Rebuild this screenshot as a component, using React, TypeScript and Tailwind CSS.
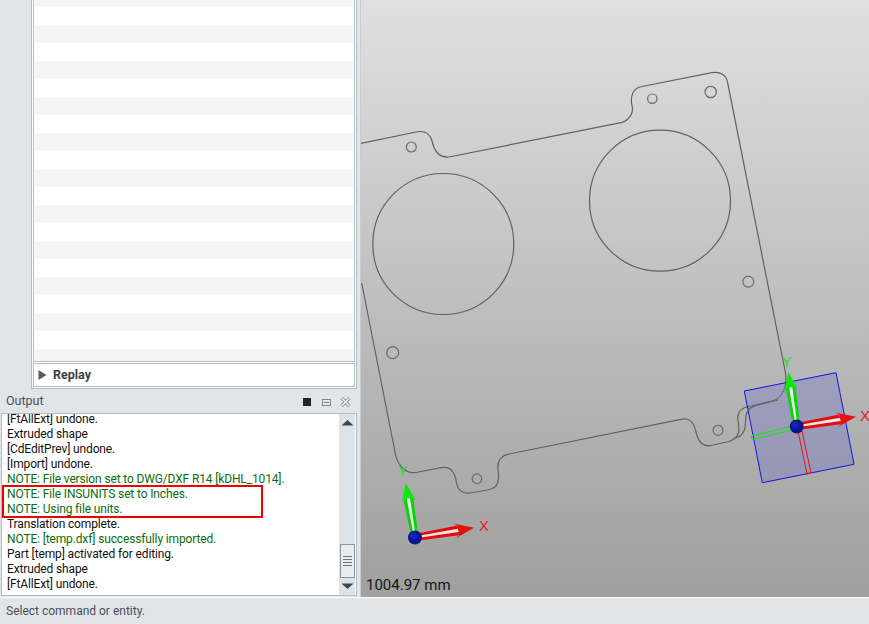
const rows = Array.from({ length: 20 }, (_, i) => i);

const outputLines = [
  { text: "[FtAllExt] undone." },
  { text: "Extruded shape" },
  { text: "[CdEditPrev] undone." },
  { text: "[Import] undone." },
  { text: "NOTE: File version set to DWG/DXF R14 [kDHL_1014].", note: true },
  { text: "NOTE: File INSUNITS set to Inches.", note: true },
  { text: "NOTE: Using file units.", note: true },
  { text: "Translation complete." },
  { text: "NOTE: [temp.dxf] successfully imported.", note: true },
  { text: "Part [temp] activated for editing." },
  { text: "Extruded shape" },
  { text: "[FtAllExt] undone." },
];

const platePath =
  "M361 143.3 L416 132 C426 130 430 134 432 141 C434 150 438 158 449 157 L621 122.7 C630 120 634 112 632 106 C630 96 633 88 642 86.5 L712 72.7 C720 71 726 75 727.5 82 L785.5 373 C787 388 782 398 772 401 L749 406.5 C740 408 737 414 738 421 C740 432 739 438 729 441.5 L711 445.5 C702 447 698 441 696 432 C694 423 690 417 681 419.3 L509 454 C500 456 497 462 498 470 C500 482 497 488 490 489.5 L470 493 C461 494 457 488 456 480 C454 470 449 466 441 467.7 L416 472.5 C404 474 397 464 395 452 L361.7 283";

const holes = [
  { x: 411.3, y: 147, r: 5 },
  { x: 652.3, y: 98.7, r: 4.7 },
  { x: 710.7, y: 92, r: 5.7 },
  { x: 748.3, y: 281.7, r: 5.5 },
  { x: 392.7, y: 352.7, r: 6 },
  { x: 477, y: 478.7, r: 4.8 },
  { x: 718, y: 430.3, r: 5 },
];

const arrowPoints = (ox: number, oy: number, tx: number, ty: number) => {
  const len = Math.hypot(tx - ox, ty - oy);
  const u = [(tx - ox) / len, (ty - oy) / len];
  const n = [-u[1], u[0]];
  const at = (d: number, s: number) => `${ox + u[0] * d + n[0] * s},${oy + u[1] * d + n[1] * s}`;
  const neck = len - 16;
  const base = len - 20;
  return {
    shaft: [at(0, 3.5), at(neck, 5), at(neck, -5), at(0, -3.5)].join(" "),
    head: [at(len, 0), at(base, 7.5), at(neck, 5), at(neck, -5), at(base, -7.5)].join(" "),
    shine: [at(4, 1), at(neck, 1.6), at(neck, -1.6), at(4, -1)].join(" "),
  };
};

const Gizmo = ({ ox, oy, tipY, tipX }: { ox: number; oy: number; tipY: [number, number]; tipX: [number, number] }) => {
  const y = arrowPoints(ox, oy, tipY[0], tipY[1]);
  const x = arrowPoints(ox, oy, tipX[0], tipX[1]);
  return (
    <g>
      <polygon points={y.shaft} fill="#10d010" />
      <polygon points={y.head} fill="#0fe80f" />
      <polygon points={y.shine} fill="#e4ffe4" />
      <polygon points={x.shaft} fill="#dd1010" />
      <polygon points={x.head} fill="#e80f0f" />
      <polygon points={x.shine} fill="#ffe4e4" />
      <circle cx={ox} cy={oy} r="7" fill="#08168e" />
      <circle cx={ox - 1.5} cy={oy - 1.5} r="3.5" fill="#1426b0" />
    </g>
  );
};

const ViewportDrawing = () => (
  <svg viewBox="361 0 508 597" className="absolute inset-0 h-full w-full">
    <path d={platePath} fill="none" stroke="#626262" strokeWidth="1.2" />
    <circle cx="443.3" cy="244" r="70.5" fill="none" stroke="#626262" strokeWidth="1.2" />
    <circle cx="660" cy="200.7" r="70.5" fill="none" stroke="#626262" strokeWidth="1.2" />
    {holes.map((h) => (
      <circle key={`${h.x}-${h.y}`} cx={h.x} cy={h.y} r={h.r} fill="none" stroke="#6a6a6a" strokeWidth="1.2" />
    ))}

    <polygon points="744.3,391 836,372.7 854,464.3 762.3,482.7" fill="#7070c8" fillOpacity="0.35" stroke="#1414e6" strokeWidth="1" />
    <path d="M778 400 C760 405 748 404 746 416 C745 424 747 434 736 438" fill="none" stroke="#626262" strokeWidth="1.2" />
    <polygon points="751,436 791,426.5 792,430 752,439.5" fill="none" stroke="#14e614" strokeWidth="1" />
    <polygon points="798,431 802,431 811,473 807,474" fill="none" stroke="#e61414" strokeWidth="1" />
    <polygon points="788,380 791,379 797,420 794,420" fill="none" stroke="#e61414" strokeWidth="1" />

    <Gizmo ox={415} oy={537.5} tipY={[405.7, 482.7]} tipX={[474, 527.7]} />
    <Gizmo ox={796.7} oy={426.5} tipY={[788.3, 371.7]} tipX={[856, 416.7]} />

    <text x="398" y="476" fill="#18e018" fontSize="14" fontFamily="Liberation Sans, sans-serif">Y</text>
    <text x="479" y="531" fill="#f01818" fontSize="15" fontFamily="Liberation Sans, sans-serif">X</text>
    <text x="782" y="367" fill="#18e018" fontSize="14" fontFamily="Liberation Sans, sans-serif">Y</text>
    <text x="860" y="421" fill="#f01818" fontSize="15" fontFamily="Liberation Sans, sans-serif">X</text>
  </svg>
);

const ScrollArrow = ({ up }: { up?: boolean }) => (
  <svg width="13" height="7" viewBox="0 0 13 7">
    <polygon points={up ? "6.5,1 12.5,6.5 0.5,6.5" : "0.5,0.5 12.5,0.5 6.5,6"} fill="#3d4650" />
  </svg>
);

const App = () => {
  return (
    <div className="flex h-[624px] w-[869px] flex-col overflow-hidden bg-[#e1e5e8] font-['Roboto',sans-serif] text-[12px]">
      <div className="flex h-[597px]">
        <div className="flex w-[360px] flex-col">
          <div className="ml-[31px] mr-[3px] flex h-[389px] flex-col border-x border-b border-[#b4bcc4] bg-white px-px pb-px">
            <div className="h-[362px] border-x border-b border-[#b4bcc4] px-px">
              <div className="h-[361px] overflow-hidden bg-white">
                <div className="h-[7px] bg-[#f5f5f5]" />
                {rows.map((i) => (
                  <div key={i} className={i % 2 === 0 ? "h-[18px] bg-white" : "h-[18px] bg-[#f5f5f5]"} />
                ))}
              </div>
            </div>
            <div className="mt-px flex h-[24px] items-center gap-[6px] border border-[#b4bcc4] pl-[4px]">
              <svg width="9" height="10" viewBox="0 0 9 10">
                <polygon points="0.5,0 8.5,5 0.5,10" fill="#565c62" />
              </svg>
              <span className="text-[12.5px] font-bold text-[#3b3f44]">Replay</span>
            </div>
          </div>

          <div className="flex h-[24px] items-center justify-between pl-[6px] pr-[9px] pt-[1px] text-[#4a5058]">
            <span className="text-[12.5px]">Output</span>
            <div className="flex items-center">
              <div className="h-[8px] w-[8px] bg-[#222]" />
              <div className="ml-[11px] mt-[2px] flex h-[7px] w-[9px] items-center justify-center border border-[#80868c]">
                <div className="h-px w-[5px] bg-[#80868c]" />
              </div>
              <svg width="11" height="10" viewBox="0 0 11 10" className="ml-[9px]">
                <path d="M1.5 1 L9.5 9 M9.5 1 L1.5 9" stroke="#8d9399" strokeWidth="3.2" fill="none" />
                <path d="M1.5 1 L9.5 9 M9.5 1 L1.5 9" stroke="#eef0f2" strokeWidth="1.4" fill="none" />
              </svg>
            </div>
          </div>

          <div className="relative ml-px mr-[3px] flex h-[183px] border border-[#b4bcc4] bg-white">
            <div className="h-full flex-1 overflow-hidden pl-[5px]">
              <div className="-mt-[2px] leading-[15px] tracking-[-0.14px]">
                {outputLines.map((line, i) => (
                  <div key={i} className={line.note ? "h-[15px] whitespace-nowrap text-[#0a6e0a]" : "h-[15px] whitespace-nowrap text-[#111]"}>
                    {line.text}
                  </div>
                ))}
              </div>
            </div>
            <div className="mr-px flex w-[16px] flex-col items-center justify-between bg-[#dde1e8] pb-[5px] pt-[5px]">
              <ScrollArrow up />
              <div className="mt-auto flex h-[34px] w-[15px] flex-col items-center justify-center gap-[2px] border border-[#8e959c] bg-[#e9ecef]">
                <div className="h-px w-[9px] bg-[#6d737a]" />
                <div className="h-px w-[9px] bg-[#6d737a]" />
                <div className="h-px w-[9px] bg-[#6d737a]" />
                <div className="h-px w-[9px] bg-[#6d737a]" />
              </div>
              <div className="mt-[5px]">
                <ScrollArrow />
              </div>
            </div>
            <div className="absolute left-0 top-[71px] h-[33px] w-[261px] border-2 border-[#f00000]" />
          </div>
        </div>

        <div className="relative flex-1 overflow-hidden border-l border-[#c6ccd2] bg-gradient-to-b from-[#e0e0e0] to-[#9f9f9f]">
          <ViewportDrawing />
          <span className="absolute bottom-[1px] left-[5px] text-[15px] text-[#161616]">1004.97 mm</span>
        </div>
      </div>

      <div className="flex h-[27px] items-center border-t border-white pl-[6px] text-[#4a5058]">Select command or entity.</div>
    </div>
  );
};

export default App;
